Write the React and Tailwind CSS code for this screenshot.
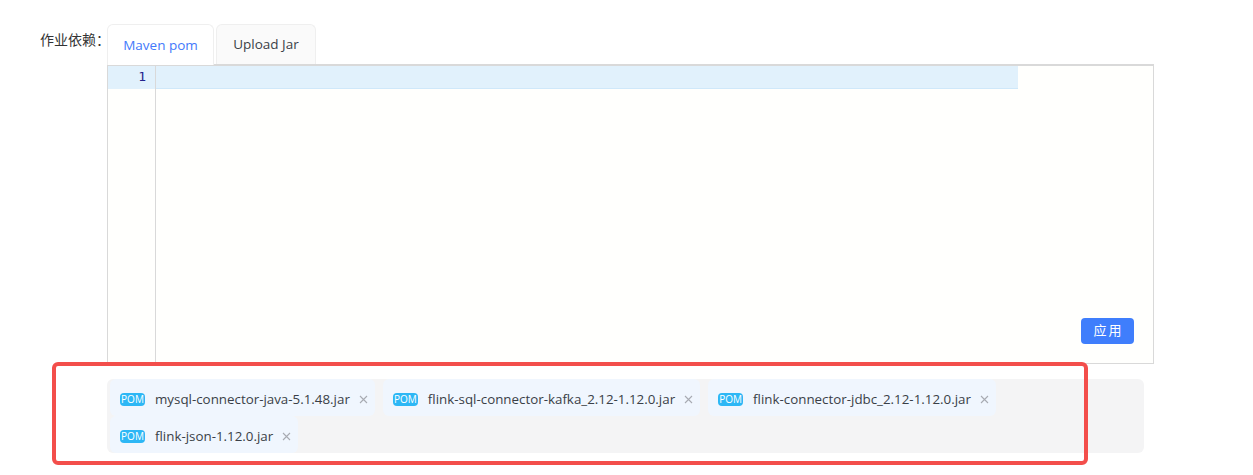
import React from "react";

const jars = [
  "mysql-connector-java-5.1.48.jar",
  "flink-sql-connector-kafka_2.12-1.12.0.jar",
  "flink-connector-jdbc_2.12-1.12.0.jar",
  "flink-json-1.12.0.jar",
];

const font = "font-['Open_Sans','Noto_Sans_CJK_SC',sans-serif]";

const JarTag = ({ name }) => (
  <div className="flex h-[37px] items-center rounded-md bg-[#f0f6fe] pl-[10px] pr-[7px] pt-[3px]">
    <span className="flex h-[13px] w-[25px] items-center justify-center rounded-[4px] bg-[#2db7f5] text-[10px] leading-none text-white">
      POM
    </span>
    <span className="ml-[10px] text-[13.35px] text-[#3a3f47]">{name}</span>
    <svg className="ml-[9px] h-[9px] w-[9px]" viewBox="0 0 9 9" fill="none" stroke="#a8abb2" strokeWidth="1.1">
      <path d="M1 1l7 7M8 1l-7 7" />
    </svg>
  </div>
);

const App = () => {
  return (
    <div className={`relative h-[475px] w-[1253px] overflow-hidden bg-white ${font}`}>
      <div className="flex pt-6">
        <div className="w-[107px] pl-[40px] pt-[7px] text-[14px] leading-[18px] whitespace-nowrap text-[#333]">作业依赖：</div>
        <div className="w-[1047px]">
          {/* tabs */}
          <div className="flex gap-[2px]">
            <div className="flex h-[41px] w-[107px] items-center justify-center rounded-t-md border border-b-0 border-[#efefef] bg-white text-[13.5px] text-[#4379fb]">
              Maven pom
            </div>
            <div className="flex h-[40px] w-[100px] items-center justify-center rounded-t-md border border-b-0 border-[#efefef] bg-[#fafafa] text-[13.5px] text-[#3a3f47]">
              Upload Jar
            </div>
          </div>

          {/* editor */}
          <div className="-mt-px flex h-[300px] border border-t-2 border-[#d9d9d9] bg-[#fffffd]">
            <div className="w-[48px] border-r border-[#d9d9d9]">
              <div className="h-[23px] bg-[#e1f1fc] pr-[9px] text-right font-['DejaVu_Sans_Mono',monospace] text-[13px] leading-[21px] text-[#23238c]">
                1
              </div>
            </div>
            <div className="relative flex-1">
              <div className="h-[23px] w-[862px] border-b border-[#cfe8fa] bg-[#e1f1fc]" />
              <button className="absolute bottom-[19px] right-[19px] h-[26px] w-[53px] rounded-[4px] bg-[#3f7efc] pl-[2px] text-[13px] tracking-[2px] text-white">
                应用
              </button>
            </div>
          </div>

          {/* uploaded jars */}
          <div className="mt-[15px] flex w-[1037px] flex-wrap gap-x-[8px] rounded-md bg-[#f4f4f5] pl-[3px]">
            {jars.map((jar) => (
              <JarTag key={jar} name={jar} />
            ))}
          </div>
        </div>
      </div>

      {/* annotation box */}
      <div className="absolute left-[52px] top-[362px] h-[103px] w-[1036px] rounded-[6px] border-4 border-[#f34e4b]" />
    </div>
  );
};

export default App;
